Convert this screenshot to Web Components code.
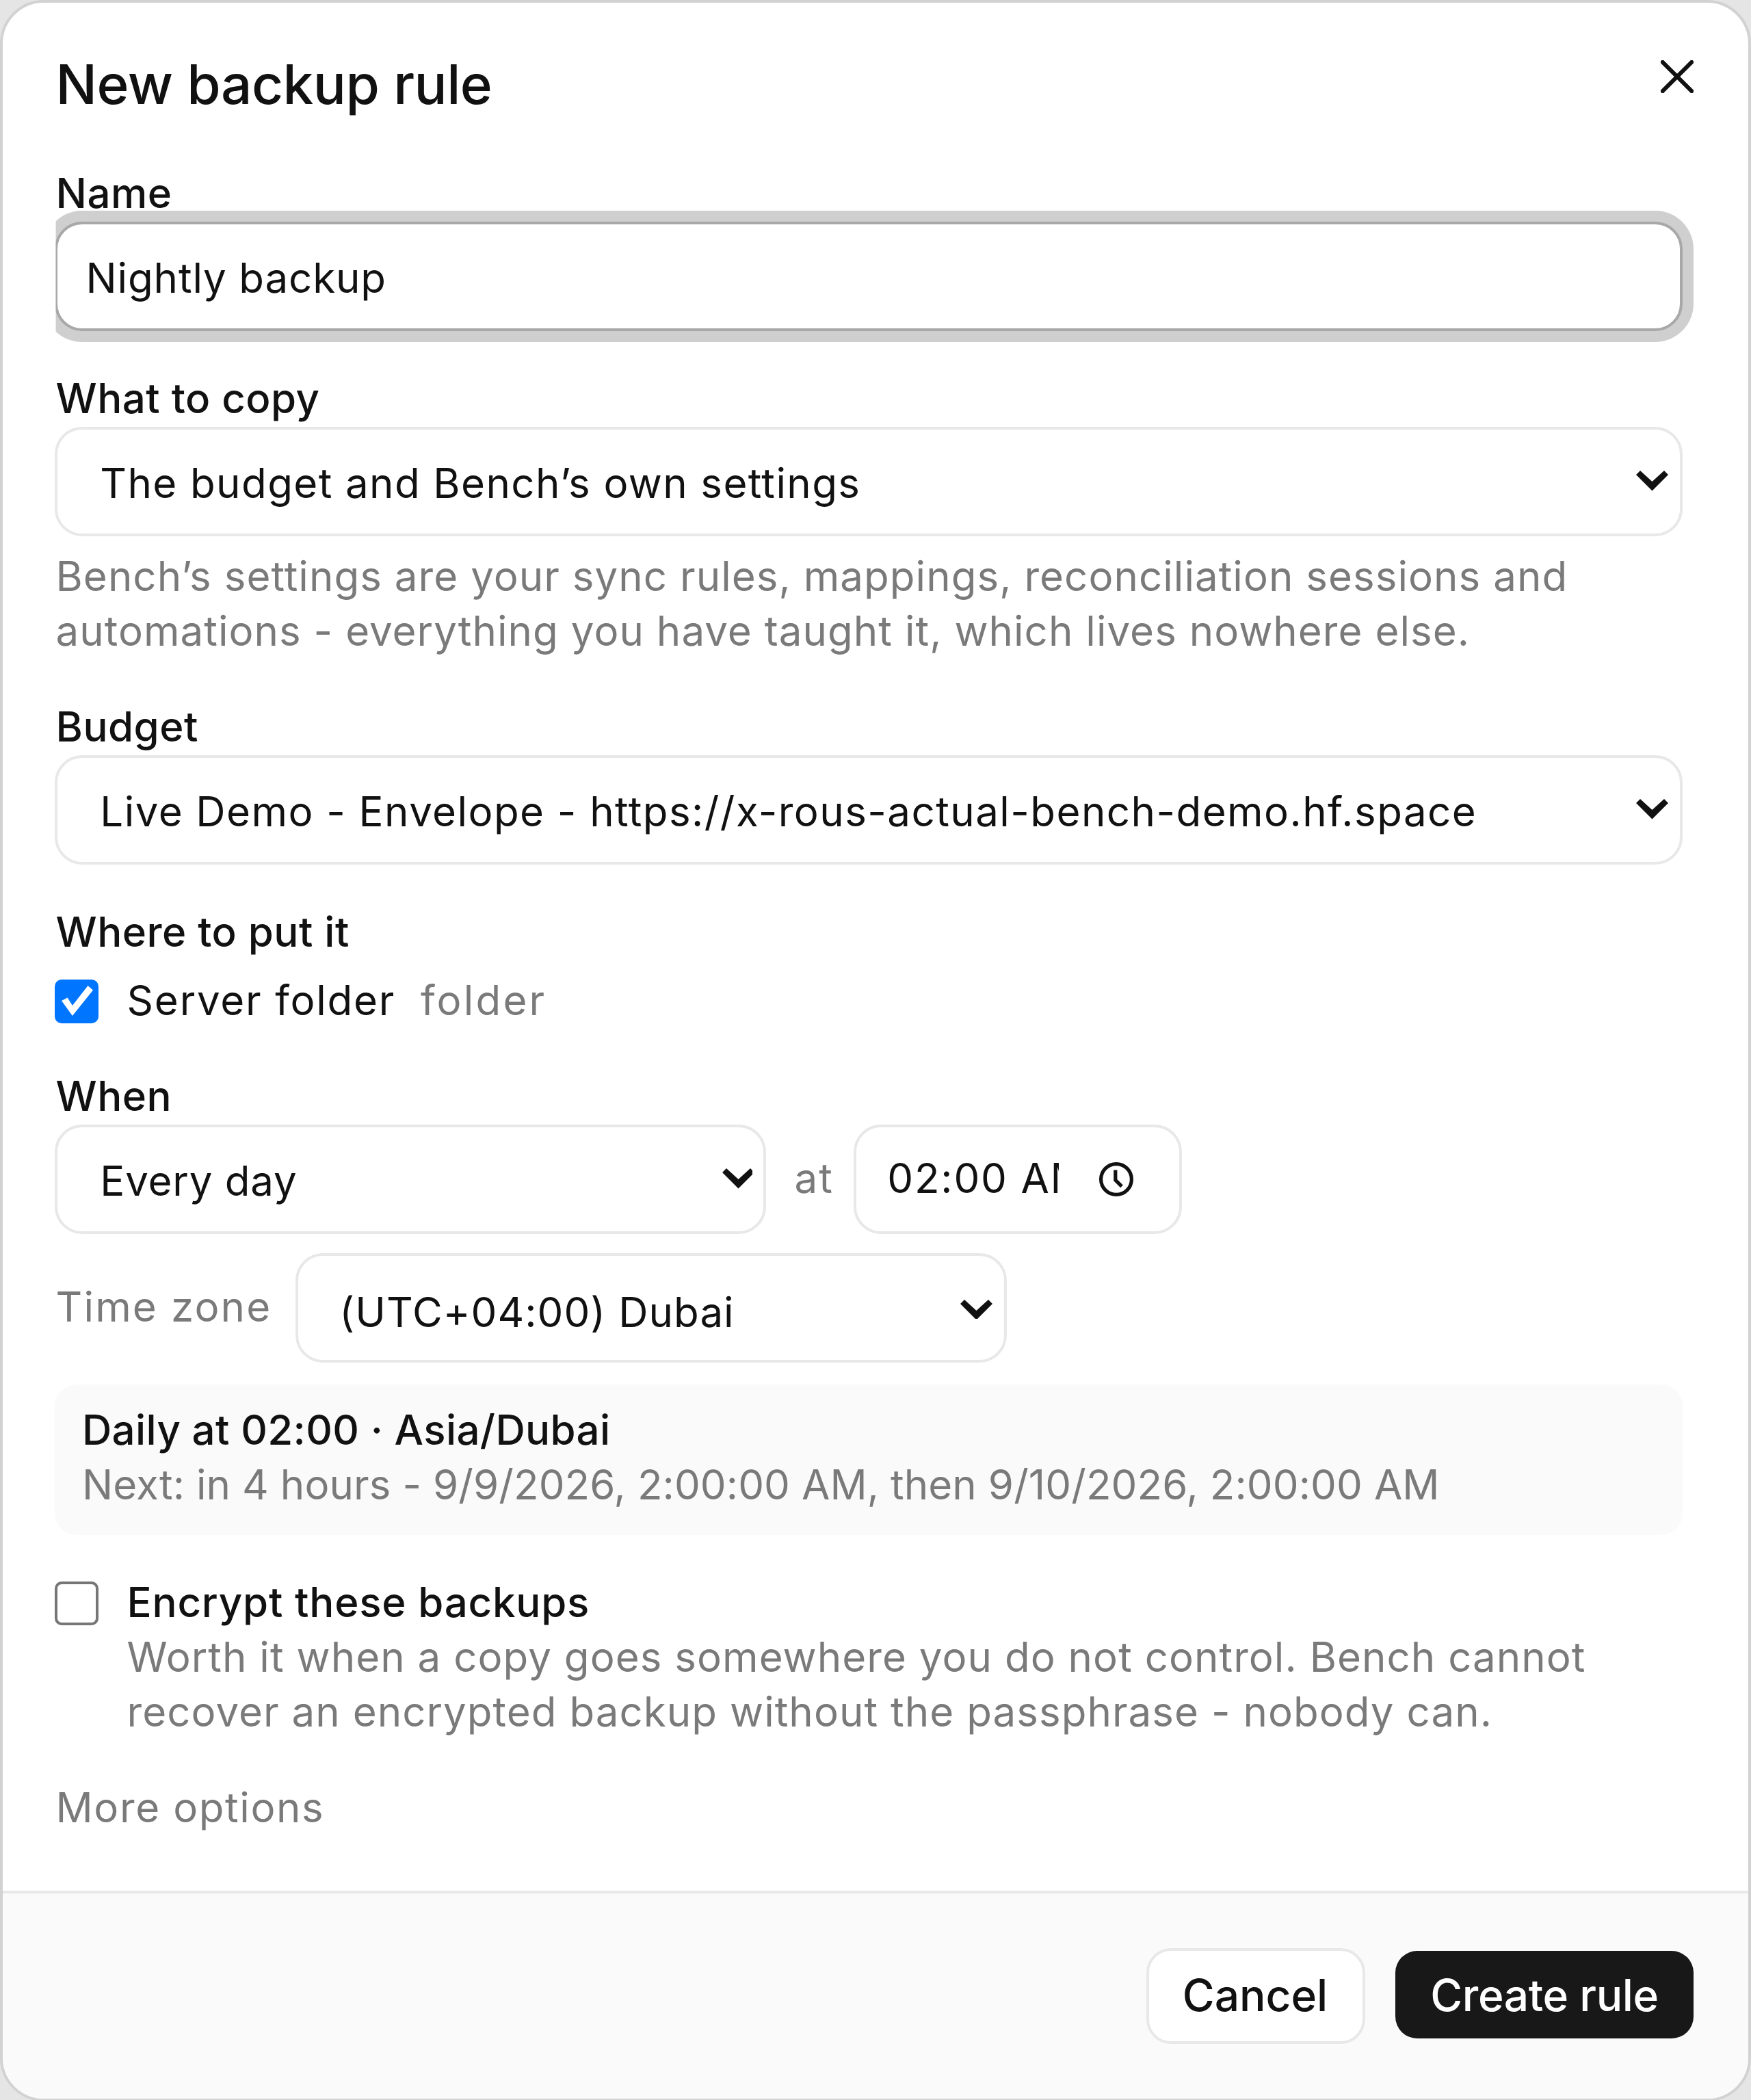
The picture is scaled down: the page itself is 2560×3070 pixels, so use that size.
<!doctype html>
<html lang="en">
<head>
<meta charset="utf-8">
<title>New backup rule</title>
<style>
  html, body { margin: 0; padding: 0; background: #e5e5e5; overflow: hidden; }
  body { width: 2560px; height: 3070px; font-family: Inter, "Liberation Sans", sans-serif; color: #111; }
</style>
</head>
<body>
<backup-dialog heading="New backup rule">
  <form-field label="Name"><text-box value="Nightly backup" style="margin-top:-.75px"></text-box></form-field>

  <form-field label="What to copy" style="margin-top:15.45px">
    <select-box style="letter-spacing:.35px;--text-nudge:2.5px">The budget and Bench’s own settings</select-box>
    <hint-text style="margin-top:5.35px">Bench’s settings are your sync rules, mappings, reconciliation sessions and automations - everything you have taught it, which lives nowhere else.</hint-text>
  </form-field>

  <form-field label="Budget" style="margin-top:15.2px">
    <select-box style="letter-spacing:.36px;margin-top:-.75px;--text-nudge:2.5px">Live Demo - Envelope - https://x-rous-actual-bench-demo.hf.space</select-box>
  </form-field>

  <form-field label="Where to put it" style="margin-top:15.45px">
    <check-row checked style="margin-top:5.3px;letter-spacing:.45px">Server folder <span style="color:#7a7a7a;margin-left:4.5px;letter-spacing:.8px">folder</span></check-row>
  </form-field>

  <form-field label="When" style="margin-top:14.95px">
    <schedule-row style="margin-top:-.1px">
      <select-box style="width:260px;letter-spacing:.2px;--text-nudge:1.5px">Every day</select-box>
      <span style="color:#7a7a7a;margin:0 7px 0 10px;font-size:15px;letter-spacing:.5px">at</span>
      <time-box value="02:00 AM"></time-box>
    </schedule-row>
    <schedule-row style="margin-top:7.35px">
      <span style="color:#7a7a7a;font-size:15px;letter-spacing:.54px;width:87.5px;flex:none">Time zone</span>
      <select-box style="width:260px;letter-spacing:.26px;--text-nudge:2.5px">(UTC+04:00) Dubai</select-box>
    </schedule-row>
    <summary-panel>
      <strong slot="title">Daily at 02:00 · Asia/Dubai</strong>
      Next: in 4 hours - 9/9/2026, 2:00:00 AM, then 9/10/2026, 2:00:00 AM
    </summary-panel>
  </form-field>

  <check-row style="margin-top:14.5px">
    <span style="font-weight:500;letter-spacing:.2px">Encrypt these backups</span>
    <hint-text slot="detail" flush>Worth it when a copy goes somewhere you do not control. Bench cannot recover an encrypted backup without the passphrase - nobody can.</hint-text>
  </check-row>

  <hint-text style="margin-top:15px;letter-spacing:.4px" flush>More options</hint-text>

  <action-button slot="actions">Cancel</action-button>
  <action-button slot="actions" primary>Create rule</action-button>
</backup-dialog>

<script>
// the reference is a 640 wide dialog shot at 4x, so the shell lays out in its
// own pixels and scales up once
const base = `
  :host { box-sizing: border-box; }
  *, *::before, *::after { box-sizing: border-box; }
`;
const chevron = `<svg width="11.75" height="7.4" viewBox="0 0 47 29.5"><polygon fill="#111" points="6,0 0,6 23.5,29.5 47,6 41,0 23.5,16"/></svg>`;

class BackupDialog extends HTMLElement {
  constructor() {
    super();
    this.attachShadow({ mode: 'open' }).innerHTML = `
      <style>${base}
        :host {
          display: flex; flex-direction: column;
          width: 640px; height: 767.5px;
          transform: scale(4); transform-origin: 0 0;
          background: #fff; border: .6px solid #d2d2d2; border-radius: 16px; overflow: hidden;
          font-size: 15px; line-height: 20px; color: #111;
          font-family: Inter, "Liberation Sans", sans-serif;
        }
        header { display: flex; justify-content: space-between; height: 44.4px; padding: 16.4px 0 0 19.4px; }
        h2 { margin: 0; font-size: 20px; line-height: 28px; font-weight: 500; letter-spacing: -.13px; }
        .close { width: 12px; height: 12px; margin: 4.9px 20.5px 0 0; flex: none; }
        main { flex: 1; padding: 0 23.9px 0 19.4px; }
        footer {
          display: flex; justify-content: flex-end; align-items: center; gap: 11.5px;
          height: 75.8px; padding: 0 20px 0 0;
          background: #fafafa; border-top: 1px solid #e8e8e8;
        }
      </style>
      <header>
        <h2></h2>
        <svg class="close" viewBox="0 0 12 12" fill="none" stroke="#111" stroke-width="1.5" stroke-linecap="round"><path d="M.7.7l10.6 10.6M11.3.7L.7 11.3"/></svg>
      </header>
      <main><slot></slot></main>
      <footer><slot name="actions"></slot></footer>`;
  }
  connectedCallback() {
    this.shadowRoot.querySelector('h2').textContent = this.getAttribute('heading');
  }
}

class FormField extends HTMLElement {
  constructor() {
    super();
    this.attachShadow({ mode: 'open' }).innerHTML = `
      <style>${base}
        :host { display: block; margin-top: 15.2px; }
        :host(:first-child) { margin-top: 16px; }
        label { display: block; margin: -.5px 0 .5px; font-size: 15px; line-height: 20px; font-weight: 500; letter-spacing: .12px; }
      </style>
      <label></label><slot></slot>`;
  }
  connectedCallback() {
    this.shadowRoot.querySelector('label').textContent = this.getAttribute('label');
  }
}

class TextBox extends HTMLElement {
  constructor() {
    super();
    this.attachShadow({ mode: 'open' }).innerHTML = `
      <style>${base}
        :host { display: block; clip-path: inset(-8px -8px -8px 0); }
        div {
          display: flex; align-items: center; height: 40px; padding: 3.5px 10px 0;
          background: #fff; border: 1px solid #a8a8a8; border-radius: 10px;
          box-shadow: 0 0 0 4px #cfcfcf; letter-spacing: .21px;
        }
      </style>
      <div></div>`;
  }
  connectedCallback() {
    this.shadowRoot.querySelector('div').textContent = this.getAttribute('value');
  }
}

class SelectBox extends HTMLElement {
  constructor() {
    super();
    this.attachShadow({ mode: 'open' }).innerHTML = `
      <style>${base}
        :host {
          display: flex; align-items: center; justify-content: space-between;
          height: 40px; padding: 0 4px 0 15.2px;
          background: #fff; border: 1px solid #e8e8e8; border-radius: 10px;
        }
        span { padding-top: var(--text-nudge, 3.5px); }
        svg { flex: none; }
      </style>
      <span><slot></slot></span>${chevron}`;
  }
}

class HintText extends HTMLElement {
  constructor() {
    super();
    this.attachShadow({ mode: 'open' }).innerHTML = `
      <style>${base}
        :host { display: block; margin-top: 4.6px; color: #7a7a7a; line-height: 20px; letter-spacing: .26px; }
        :host([flush]) { margin-top: 0; }
      </style>
      <slot></slot>`;
  }
}

class CheckRow extends HTMLElement {
  constructor() {
    super();
    this.attachShadow({ mode: 'open' }).innerHTML = `
      <style>${base}
        :host { display: flex; gap: 10px; margin-top: 4.8px; align-items: flex-start; }
        .box {
          flex: none; width: 16px; height: 16px; margin-top: 2.3px;
          border: 1px solid #767676; border-radius: 2.5px; background: #fff;
        }
        :host([checked]) .box { background: #0075ff; border: 0; }
        svg { display: none; width: 16px; height: 16px; }
        :host([checked]) svg { display: block; }
      </style>
      <span class="box"><svg viewBox="0 0 64 64"><polygon fill="#fff" points="10,31 18.7,26.5 25.9,38 48.5,9 56,15.5 25.9,53"/></svg></span>
      <div><slot></slot><slot name="detail"></slot></div>`;
  }
}

class ScheduleRow extends HTMLElement {
  constructor() {
    super();
    this.attachShadow({ mode: 'open' }).innerHTML = `
      <style>${base} :host { display: flex; align-items: center; }</style>
      <slot></slot>`;
  }
}

class TimeBox extends HTMLElement {
  constructor() {
    super();
    this.attachShadow({ mode: 'open' }).innerHTML = `
      <style>${base}
        :host {
          display: flex; align-items: center; flex: none;
          width: 120.25px; height: 40px; padding: 0 0 0 11.6px;
          background: #fff; border: 1px solid #e8e8e8; border-radius: 10px;
        }
        span { display: block; width: 62.25px; overflow: hidden; white-space: nowrap; letter-spacing: .45px; }
        svg { flex: none; width: 14px; height: 14px; margin-left: 14.4px; }
      </style>
      <span></span>
      <svg viewBox="0 0 14 14" fill="none" stroke="#111" stroke-width="1.3"><circle cx="7" cy="7" r="5.6"/><path d="M6.7 3.6V7.3L9 9.6"/></svg>`;
  }
  connectedCallback() {
    this.shadowRoot.querySelector('span').textContent = this.getAttribute('value');
  }
}

class SummaryPanel extends HTMLElement {
  constructor() {
    super();
    this.attachShadow({ mode: 'open' }).innerHTML = `
      <style>${base}
        :host {
          display: block; margin-top: 7.6px; padding: 7.5px 9.6px 8px;
          background: #fafafa; border-radius: 8px; color: #7a7a7a; letter-spacing: .02px;
        }
        .title { display: block; color: #111; letter-spacing: .09px; }
        ::slotted(strong) { font-weight: 500; }
      </style>
      <span class="title"><slot name="title"></slot></span><slot></slot>`;
  }
}

class ActionButton extends HTMLElement {
  constructor() {
    super();
    this.attachShadow({ mode: 'open' }).innerHTML = `
      <style>${base}
        :host {
          display: flex; align-items: center; justify-content: center;
          height: 35px; width: 79.5px;
          background: #fff; border: 1px solid #e8e8e8; border-radius: 9px;
          font-size: 16px; font-weight: 500; color: #111;
        }
        :host([primary]) { height: 32.5px; width: 109px; background: #181818; border: 0; color: #fff; border-radius: 8px; letter-spacing: -.1px; }
      </style>
      <slot></slot>`;
  }
}

customElements.define('backup-dialog', BackupDialog);
customElements.define('form-field', FormField);
customElements.define('text-box', TextBox);
customElements.define('select-box', SelectBox);
customElements.define('hint-text', HintText);
customElements.define('check-row', CheckRow);
customElements.define('schedule-row', ScheduleRow);
customElements.define('time-box', TimeBox);
customElements.define('summary-panel', SummaryPanel);
customElements.define('action-button', ActionButton);
</script>
</body>
</html>
